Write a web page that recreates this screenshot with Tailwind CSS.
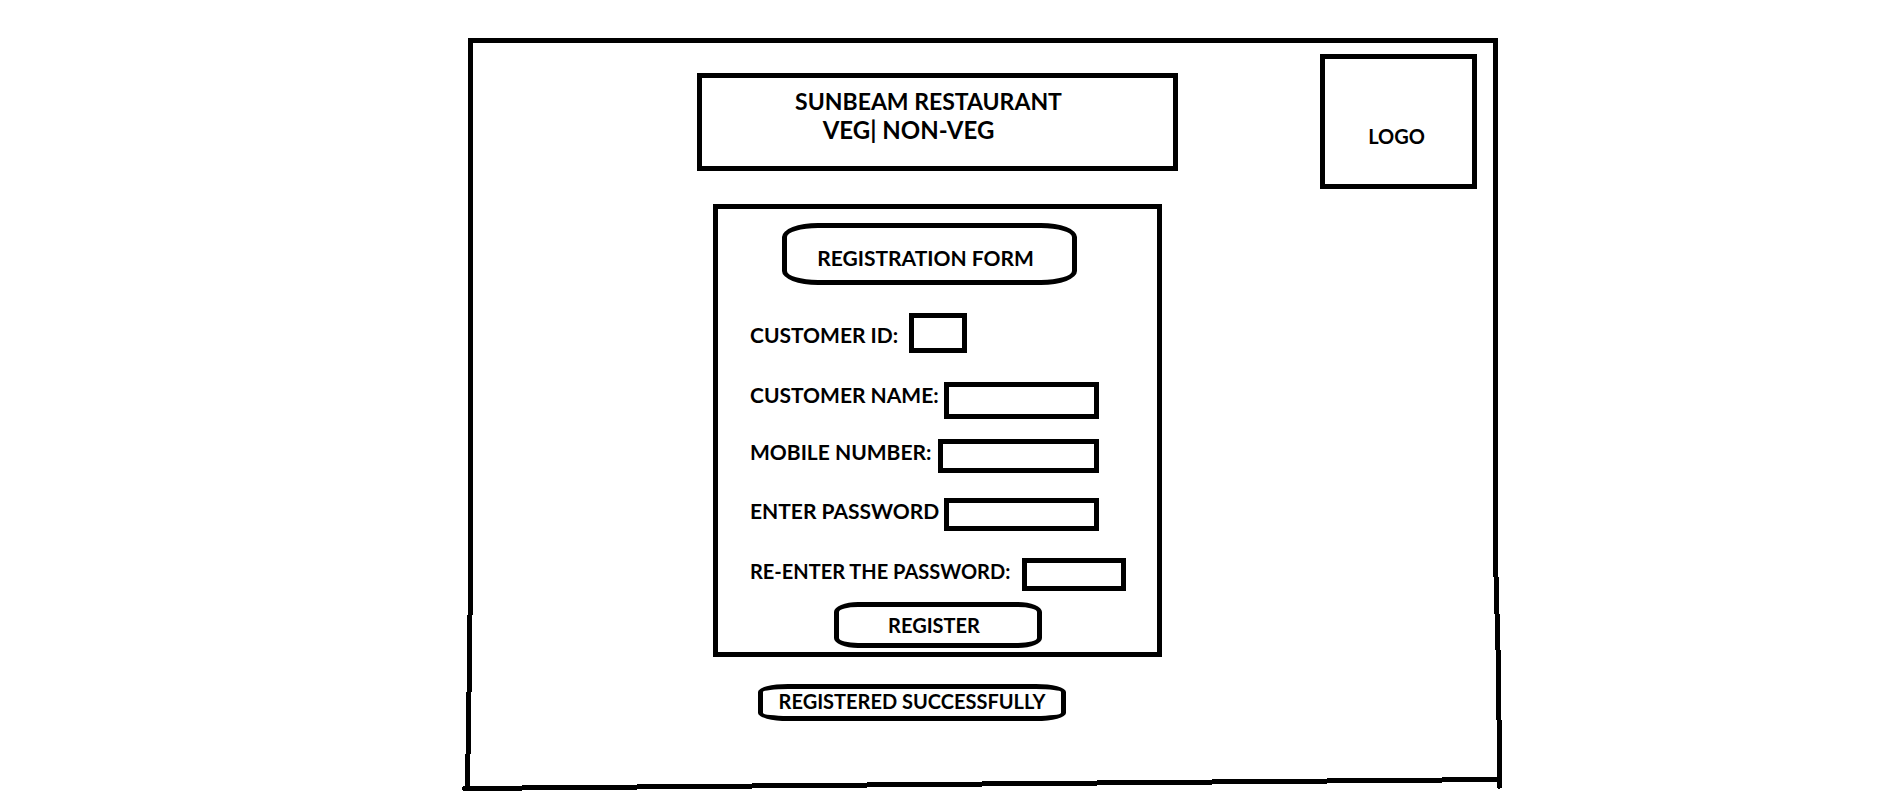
<!DOCTYPE html>
<html lang="en">
<head>
<meta charset="utf-8">
<meta name="viewport" content="width=device-width, initial-scale=1">
<title>Sunbeam Restaurant - Registration</title>
<script src="https://cdn.jsdelivr.net/npm/@tailwindcss/browser@4"></script>
</head>
<body class="min-h-screen bg-white font-['Lato',sans-serif] text-xl leading-6 font-bold text-black">
<div class="grid min-h-screen grid-cols-[468fr_1030fr_389fr] pt-[38px] pb-4">
  <main class="relative col-start-2 grid grid-cols-[229fr_481fr_142fr_157fr_21fr] content-start items-start pt-4 pb-[69px]">
    <!-- Hand-drawn outer frame -->
    <svg class="pointer-events-none absolute inset-0 h-full w-full overflow-visible" viewBox="0 0 1030 752" preserveAspectRatio="none" fill="#000" shape-rendering="crispEdges" aria-hidden="true">
      <path d="M0 0H1030V5H0Z"/>
      <path d="M0 0H5V577H4V654H3V716H2V750H-3V716H-2V654H-1V577H0Z"/>
      <path d="M1025 0H1030V539H1031V576H1032V612H1033V682H1034V750H1032V751H1030V750H1029V682H1028V612H1027V576H1026V539H1025Z"/>
      <path d="M-6 749H-5V748H54V747H169V746H284V745H399V744H514V743H629V742H744V741H859V740H974V739H1030V744H974V745H859V746H744V747H629V748H514V749H399V750H284V751H169V752H54V753H-5V752H-6Z"/>
    </svg>

    <div class="col-start-2 flex flex-col items-center pt-[19px]">
      <header class="h-[98px] w-full border-[5px] border-black pt-2 pr-[18px] text-center">
        <h1 class="text-[23px] leading-[30px]">SUNBEAM RESTAURANT</h1>
        <p class="pr-10 text-2xl leading-7">VEG| NON-VEG</p>
      </header>

      <form class="mt-[33px] flex w-[449px] max-w-full flex-col border-[5px] border-black pt-[14px] pb-1 pl-8">
        <h2 class="ml-8 flex h-[62px] w-[295px] items-center justify-center rounded-[36px/14px] border-[5px] border-black pt-2 pr-2 text-[21px]">REGISTRATION FORM</h2>

        <div class="mt-7 flex items-center">
          <label for="cid" class="w-[159px] pt-1 text-[21px] leading-[26px] whitespace-nowrap">CUSTOMER ID:</label>
          <input id="cid" type="text" class="h-10 w-[58px] border-[5px] border-black px-1 text-base outline-none">
        </div>
        <div class="mt-[29px] flex items-start">
          <label for="cname" class="w-[194px] text-[21px] leading-[26px] whitespace-nowrap">CUSTOMER NAME:</label>
          <input id="cname" type="text" class="h-[37px] w-[155px] border-[5px] border-black px-1 text-base outline-none">
        </div>
        <div class="mt-5 flex items-start">
          <label for="mobile" class="w-[188px] text-[21px] leading-[26px] whitespace-nowrap">MOBILE NUMBER:</label>
          <input id="mobile" type="tel" class="h-[34px] w-[161px] border-[5px] border-black px-1 text-base outline-none">
        </div>
        <div class="mt-[25px] flex items-start">
          <label for="pw" class="w-[194px] text-[21px] leading-[26px] whitespace-nowrap">ENTER PASSWORD</label>
          <input id="pw" type="password" class="h-[33px] w-[155px] border-[5px] border-black px-1 text-base outline-none">
        </div>
        <div class="mt-[27px] flex items-start">
          <label for="pw2" class="w-[272px] leading-[26px] whitespace-nowrap">RE-ENTER THE PASSWORD:</label>
          <input id="pw2" type="password" class="h-[33px] w-[104px] border-[5px] border-black px-1 text-base outline-none">
        </div>

        <button type="button" class="mt-[11px] ml-[84px] h-[46px] w-[208px] rounded-[24px/10px] border-[5px] border-black pr-2">REGISTER</button>
      </form>

      <p role="status" class="mt-[27px] mr-[51px] flex h-[37px] w-[308px] items-start justify-center rounded-[30px/8px] border-[5px] border-black whitespace-nowrap">REGISTERED SUCCESSFULLY</p>
    </div>

    <div class="col-start-4 flex h-[135px] items-center justify-center border-[5px] border-black pt-7 pr-1">LOGO</div>
  </main>
</div>
</body>
</html>
